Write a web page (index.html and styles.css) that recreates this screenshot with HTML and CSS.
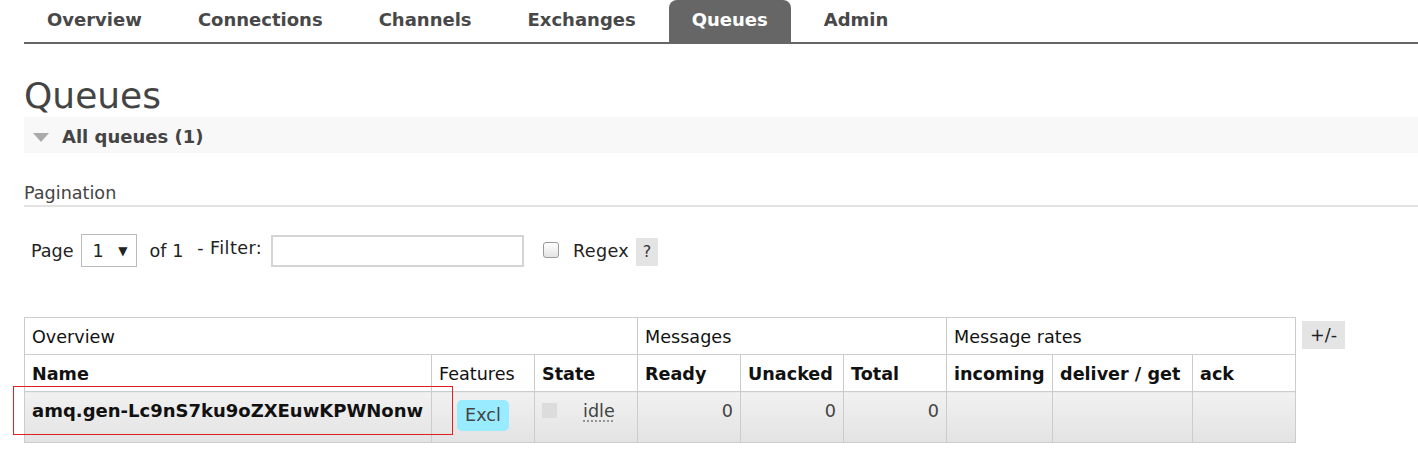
FILE: index.html
```html
<!DOCTYPE html>
<html>
<head>
<meta charset="utf-8">
<link rel="stylesheet" href="styles.css">
</head>
<body>
<ul class="nav">
  <li><a class="tab">Overview</a></li>
  <li><a class="tab">Connections</a></li>
  <li><a class="tab">Channels</a></li>
  <li><a class="tab">Exchanges</a></li>
  <li><a class="tab active">Queues</a></li>
  <li><a class="tab">Admin</a></li>
</ul>
<main class="main">
  <h1 class="title">Queues</h1>
  <div class="section-h"><span class="tri"></span><span class="section-title">All queues (1)</span></div>
  <h3 class="sub">Pagination</h3>
  <div class="pager">
    <span class="lbl">Page</span>
    <span class="sel"><span>1</span><span class="arrow">▼</span></span>
    <span class="lbl of">of 1</span>
    <span class="lbl filter">- Filter:</span>
    <span class="inp"></span>
    <span class="chk"></span>
    <span class="lbl regex">Regex</span>
    <span class="help">?</span>
  </div>
  <div class="tablewrap">
    <table class="queues">
      <colgroup>
        <col class="c-name"><col class="c-std"><col class="c-std"><col class="c-std"><col class="c-std"><col class="c-std"><col class="c-inc"><col class="c-del"><col class="c-std">
      </colgroup>
      <tr class="grp">
        <th colspan="3">Overview</th>
        <th colspan="3">Messages</th>
        <th colspan="3">Message rates</th>
      </tr>
      <tr class="hdr">
        <th>Name</th>
        <th class="light">Features</th>
        <th>State</th>
        <th>Ready</th>
        <th>Unacked</th>
        <th>Total</th>
        <th>incoming</th>
        <th>deliver / get</th>
        <th>ack</th>
      </tr>
      <tr class="row">
        <td class="name">amq.gen-Lc9nS7ku9oZXEuwKPWNonw</td>
        <td class="feat"><span class="badge">Excl</span></td>
        <td class="state"><span class="sq"></span><span class="idle">idle</span></td>
        <td class="num">0</td>
        <td class="num">0</td>
        <td class="num">0</td>
        <td></td>
        <td></td>
        <td></td>
      </tr>
    </table>
    <span class="pm">+/-</span>
    <div class="mark"></div>
  </div>
</main>
</body>
</html>
```
FILE: styles.css
```css
html, body {
  margin: 0;
  padding: 0;
  background: #fff;
}
body {
  font-family: "DejaVu Sans", Verdana, sans-serif;
  color: #444;
}
.nav {
  list-style: none;
  margin: 0 0 0 24px;
  padding: 0;
  display: flex;
  border-bottom: 2px solid #666;
  height: 42px;
}
.tab {
  display: block;
  padding: 0 23px 2px;
  margin-right: 10px;
  line-height: 40px;
  font-size: 18px;
  font-weight: bold;
  color: #484848;
}
.tab.active {
  background: #666;
  color: #fff;
  border-radius: 8px 8px 0 0;
}
.main {
  padding-left: 24px;
}
.title {
  margin: 31px 0 0;
  font-size: 36px;
  font-weight: normal;
  line-height: 42px;
  color: #444;
}
.section-h {
  background: #f8f8f8;
  height: 36px;
  box-sizing: border-box;
  padding-top: 4px;
  display: flex;
  align-items: center;
}
.tri {
  width: 0;
  height: 0;
  margin-left: 9px;
  margin-right: 13px;
  border-left: 8.5px solid transparent;
  border-right: 8.5px solid transparent;
  border-top: 9px solid #aaa;
}
.section-title {
  font-size: 18px;
  font-weight: bold;
  color: #444;
  line-height: 22px;
}
.sub {
  margin: 29px 0 0;
  font-size: 17.6px;
  font-weight: normal;
  line-height: 22px;
  padding-bottom: 1px;
  border-bottom: 2px solid #e2e2e2;
  color: #444;
}
.pager {
  margin-top: 27px;
  padding-left: 7px;
  height: 33px;
  display: flex;
  align-items: center;
  font-size: 17.6px;
  color: #222;
}
.sel {
  margin-left: 7px;
  border: 1px solid #bbb;
  display: flex;
  align-items: center;
  justify-content: space-between;
  padding: 0 8px 0 11px;
  box-sizing: border-box;
  width: 56px;
  height: 33px;
  font-size: 17.6px;
}
.arrow {
  font-size: 12px;
}
.of {
  margin-left: 13px;
}
.filter {
  margin-left: 14px;
  margin-top: -5px;
  letter-spacing: 0.4px;
}
.inp {
  margin-left: 9px;
  width: 253px;
  height: 32px;
  box-sizing: border-box;
  border: 2px solid #d4d4d4;
}
.chk {
  margin-left: 19px;
  margin-top: -2px;
  width: 16px;
  height: 16px;
  box-sizing: border-box;
  border: 1px solid #9a9a9a;
  border-radius: 3px;
  background: linear-gradient(#fff, #e3e3e3);
}
.regex {
  margin-left: 14px;
  letter-spacing: 0.3px;
}
.help {
  margin-left: 7px;
  width: 22px;
  height: 28px;
  margin-top: 2px;
  background: #e4e4e4;
  display: flex;
  align-items: center;
  justify-content: center;
  color: #333;
  font-size: 16px;
}
.tablewrap {
  position: relative;
  margin-top: 50px;
  display: flex;
  align-items: flex-start;
  gap: 6px;
}
.queues {
  border-collapse: collapse;
  table-layout: fixed;
  width: 1272px;
  font-size: 17.6px;
  color: #111;
}
.c-name { width: 407px; }
.c-std { width: 103px; }
.c-inc { width: 106px; }
.c-del { width: 140px; }
.queues th,
.queues td {
  border: 1px solid #ccc;
  padding: 0 7px;
  text-align: left;
  white-space: nowrap;
  line-height: 22px;
}
.grp th {
  font-weight: normal;
  height: 37px;
  box-sizing: border-box;
  padding-top: 1px;
}
.hdr th {
  height: 37px;
  box-sizing: border-box;
  padding-top: 1px;
}
.hdr th.light {
  font-weight: normal;
}
.row td {
  height: 51px;
  box-sizing: border-box;
  vertical-align: top;
  padding-top: 8px;
  background: linear-gradient(#f1f1f1, #e3e3e3);
}
.name {
  font-weight: bold;
  color: #111;
  font-size: 18px;
}
.feat {
  text-align: center !important;
}
.badge {
  display: inline-block;
  background: #99ebff;
  border-radius: 5px;
  padding: 4px 8px 5px;
  color: #444;
  line-height: 22px;
}
.sq {
  display: inline-block;
  width: 15px;
  height: 15px;
  background: #dcdcdc;
  vertical-align: -1px;
}
.idle {
  margin-left: 26px;
  color: #444;
  text-decoration: underline dotted #888;
  text-underline-offset: 4px;
}
.num {
  text-align: right !important;
  color: #444;
}
.pm {
  margin-top: 4px;
  width: 43px;
  height: 28px;
  background: #e4e4e4;
  display: flex;
  align-items: center;
  justify-content: center;
  font-size: 17.6px;
  color: #222;
}
.mark {
  position: absolute;
  left: -11px;
  top: 69px;
  width: 440px;
  height: 49px;
  border: 1px solid #e02020;
  box-sizing: border-box;
  pointer-events: none;
}
```
